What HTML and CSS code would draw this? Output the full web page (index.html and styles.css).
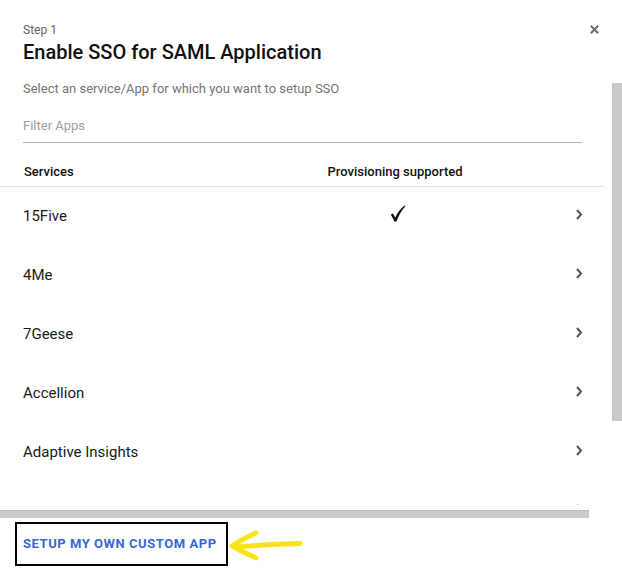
FILE: index.html
```html
<!DOCTYPE html>
<html lang="en">
<head>
<meta charset="utf-8">
<title>Enable SSO for SAML Application</title>
<link rel="stylesheet" href="styles.css">
</head>
<body>
<div class="dialog">
  <header class="head">
    <div class="head-text">
      <div class="step">Step 1</div>
      <h1 class="title">Enable SSO for SAML Application</h1>
    </div>
    <button class="close" aria-label="Close">
      <svg width="9" height="9" viewBox="0 0 9 9"><path d="M0.8 0.8 L8.2 8.2 M8.2 0.8 L0.8 8.2" stroke="#6b6b6b" stroke-width="2" fill="none"/></svg>
    </button>
  </header>

  <div class="body">
    <div class="main">
      <p class="subtitle">Select an service/App for which you want to setup SSO</p>
      <input class="filter" type="text" placeholder="Filter Apps">
      <div class="table">
        <div class="row thead">
          <div class="c-name">Services</div>
          <div class="c-prov">Provisioning supported</div>
          <div></div>
        </div>
        <div class="row item">
          <div class="c-name">15Five</div>
          <div class="c-prov"><svg class="check" width="16" height="18" viewBox="0 0 16 18"><path d="M0.8 9.6 L2.9 8.4 L5.3 12.6 Q8.6 5.2 14.6 0.6 L15.4 1.3 Q10.3 6.6 6.4 16.6 L4.6 16.8 Z" fill="#111"/></svg></div>
          <div class="c-go"><svg width="8" height="11" viewBox="0 0 8 11"><path d="M2 1 L6 5.5 L2 10" stroke="#555" stroke-width="2" fill="none"/></svg></div>
        </div>
        <div class="row item">
          <div class="c-name">4Me</div>
          <div class="c-prov"></div>
          <div class="c-go"><svg width="8" height="11" viewBox="0 0 8 11"><path d="M2 1 L6 5.5 L2 10" stroke="#555" stroke-width="2" fill="none"/></svg></div>
        </div>
        <div class="row item">
          <div class="c-name">7Geese</div>
          <div class="c-prov"></div>
          <div class="c-go"><svg width="8" height="11" viewBox="0 0 8 11"><path d="M2 1 L6 5.5 L2 10" stroke="#555" stroke-width="2" fill="none"/></svg></div>
        </div>
        <div class="row item">
          <div class="c-name">Accellion</div>
          <div class="c-prov"></div>
          <div class="c-go"><svg width="8" height="11" viewBox="0 0 8 11"><path d="M2 1 L6 5.5 L2 10" stroke="#555" stroke-width="2" fill="none"/></svg></div>
        </div>
        <div class="row item">
          <div class="c-name">Adaptive Insights</div>
          <div class="c-prov"></div>
          <div class="c-go"><svg width="8" height="11" viewBox="0 0 8 11"><path d="M2 1 L6 5.5 L2 10" stroke="#555" stroke-width="2" fill="none"/></svg></div>
        </div>
        <div class="row item">
          <div class="c-name"></div>
          <div class="c-prov"></div>
          <div class="c-go"><svg width="8" height="11" viewBox="0 0 8 11"><path d="M2 1 L6 5.5 L2 10" stroke="#555" stroke-width="2" fill="none"/></svg></div>
        </div>
      </div>
    </div>
    <div class="vscroll"><div class="vthumb"></div></div>
  </div>

  <div class="hscroll"><div class="hthumb"></div></div>

  <footer class="foot">
    <button class="custom">SETUP MY OWN CUSTOM APP</button>
    <svg class="arrow" width="76" height="44" viewBox="0 0 76 44">
      <path d="M28 11 Q14 17 4 24 Q15 30 28 36" stroke="#f9e21a" stroke-width="5" fill="none" stroke-linecap="round" stroke-linejoin="round"/>
      <path d="M6 25 Q36 22.5 72 21.5" stroke="#f9e21a" stroke-width="5" fill="none" stroke-linecap="round"/>
    </svg>
  </footer>
</div>
</body>
</html>
```

FILE: styles.css
```css
* { box-sizing: border-box; }

html, body {
  margin: 0;
  padding: 0;
  background: #fff;
}

body {
  font-family: Roboto, "Liberation Sans", Arial, sans-serif;
  color: #212121;
}

.dialog {
  width: 622px;
  height: 576px;
  overflow: hidden;
}

.head {
  display: flex;
  justify-content: space-between;
  align-items: flex-start;
  height: 79px;
  padding: 23px 23px 0 23px;
}

.step {
  font-size: 12px;
  line-height: 14px;
  color: #666;
}

.title {
  margin: 3px 0 0 0;
  font-size: 20px;
  line-height: 24px;
  font-weight: 500;
  color: #111;
}

.close {
  margin-top: 2px;
  width: 9px;
  height: 9px;
  padding: 0;
  border: none;
  background: none;
  display: flex;
}

.body {
  display: flex;
  height: 426px;
}

.main {
  width: 612px;
  height: 426px;
  overflow: hidden;
}

.subtitle {
  margin: 2px 0 0 23px;
  font-size: 13px;
  line-height: 16px;
  color: #757575;
}

.filter {
  display: block;
  width: 559px;
  height: 26px;
  margin: 20px 0 0 23px;
  padding: 0 0 9px 0;
  border: none;
  border-bottom: 1px solid #b5b5b5;
  outline: none;
  font-family: Roboto, "Liberation Sans", Arial, sans-serif;
  font-size: 13px;
  line-height: 16px;
  color: #212121;
  background: transparent;
}

.filter::placeholder {
  color: #9e9e9e;
}

.table {
  width: 605px;
}

.row {
  display: grid;
  grid-template-columns: 305px 134px 1fr;
  padding: 0 23px;
}

.thead {
  padding-top: 21px;
  padding-bottom: 6px;
  border-bottom: 1px solid #e3e3e3;
  font-size: 13px;
  line-height: 16px;
  font-weight: 500;
  color: #111;
}

.thead .c-name {
  padding-left: 1px;
}

.thead .c-prov {
  text-align: center;
  white-space: nowrap;
}

.item {
  height: 59px;
  padding-top: 20px;
  font-size: 15px;
  line-height: 18px;
  color: #1a1a1a;
  align-items: start;
}

.c-prov {
  display: flex;
  justify-content: center;
}

.check {
  display: block;
  margin-top: -2px;
  margin-left: 6px;
}

.c-go {
  display: flex;
  justify-content: flex-end;
}

.c-go svg {
  display: block;
  margin-top: 2px;
  margin-right: -1px;
}

.vscroll {
  width: 10px;
  padding-top: 4px;
}

.vthumb {
  width: 10px;
  height: 338px;
  background: #cbcbcb;
  border-left: 1px solid #c2c2c2;
}

.hscroll {
  height: 13px;
  padding-top: 5px;
}

.hthumb {
  width: 589px;
  height: 8px;
  background: #cbcbcb;
  border-top: 1px solid #bcbcbc;
}

.foot {
  display: flex;
  align-items: center;
  padding: 4px 0 0 15px;
}

.custom {
  height: 44px;
  padding: 0 9px 0 6px;
  border: 2px solid #000;
  background: #fff;
  font-family: Roboto, "Liberation Sans", Arial, sans-serif;
  font-size: 13px;
  font-weight: 700;
  letter-spacing: 0.55px;
  line-height: 16px;
  color: #3b67d4;
  white-space: nowrap;
}

.arrow {
  display: block;
}
```
